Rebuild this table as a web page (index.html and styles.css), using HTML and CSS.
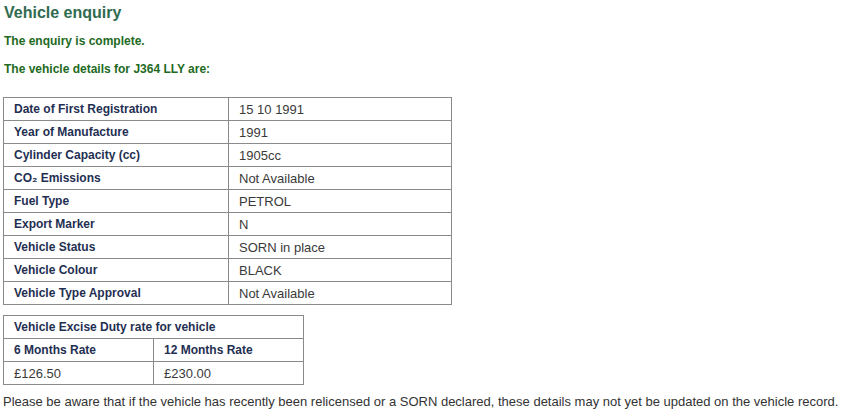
FILE: index.html
```html
<!DOCTYPE html>
<html lang="en">
<head>
<meta charset="utf-8">
<title>Vehicle enquiry</title>
<link rel="stylesheet" href="styles.css">
</head>
<body>
<div class="page">
  <h1 class="title">Vehicle enquiry</h1>
  <p class="status">The enquiry is complete.</p>
  <p class="status status-details">The vehicle details for J364 LLY are:</p>

  <table class="details">
    <tr><th>Date of First Registration</th><td>15 10 1991</td></tr>
    <tr><th>Year of Manufacture</th><td>1991</td></tr>
    <tr><th>Cylinder Capacity (cc)</th><td>1905cc</td></tr>
    <tr><th>CO₂ Emissions</th><td>Not Available</td></tr>
    <tr><th>Fuel Type</th><td>PETROL</td></tr>
    <tr><th>Export Marker</th><td>N</td></tr>
    <tr><th>Vehicle Status</th><td>SORN in place</td></tr>
    <tr><th>Vehicle Colour</th><td>BLACK</td></tr>
    <tr><th>Vehicle Type Approval</th><td>Not Available</td></tr>
  </table>

  <table class="duty">
    <tr><th colspan="2">Vehicle Excise Duty rate for vehicle</th></tr>
    <tr><th>6 Months Rate</th><th>12 Months Rate</th></tr>
    <tr><td>£126.50</td><td>£230.00</td></tr>
  </table>

  <p class="note">Please be aware that if the vehicle has recently been relicensed or a SORN declared, these details may not yet be updated on the vehicle record.</p>
</div>
</body>
</html>
```

FILE: styles.css
```css
html, body {
  margin: 0;
  padding: 0;
  background: #ffffff;
}

.page {
  padding: 3px 3px 0 3px;
  font-family: "Liberation Sans", Arial, sans-serif;
  font-size: 12px;
}

.title {
  margin: 0 0 0 1px;
  font-size: 16px;
  line-height: 20px;
  font-weight: bold;
  color: #2f6b4f;
}

.status {
  margin: 11px 0 0 1px;
  font-size: 12px;
  line-height: 15px;
  font-weight: bold;
  color: #1e6a1e;
}

.status-details {
  margin-top: 13px;
}

table {
  border-collapse: collapse;
  font-size: 12px;
}

th, td {
  border: 1px solid #8a8a8a;
  padding: 0 10px;
  height: 22px;
  text-align: left;
  vertical-align: middle;
  line-height: 15px;
}

th {
  font-weight: bold;
  color: #1f2f52;
}

td {
  font-weight: normal;
  font-size: 13px;
  color: #3a3a3a;
}

.details {
  margin-top: 20px;
  width: 449px;
}

.details th {
  width: 204px;
}

.duty {
  margin-top: 10px;
  width: 301px;
}

.duty th, .duty td {
  width: 130px;
}

.note {
  margin: 9px 0 0 0;
  font-size: 13px;
  line-height: 15px;
  color: #333333;
}
```
